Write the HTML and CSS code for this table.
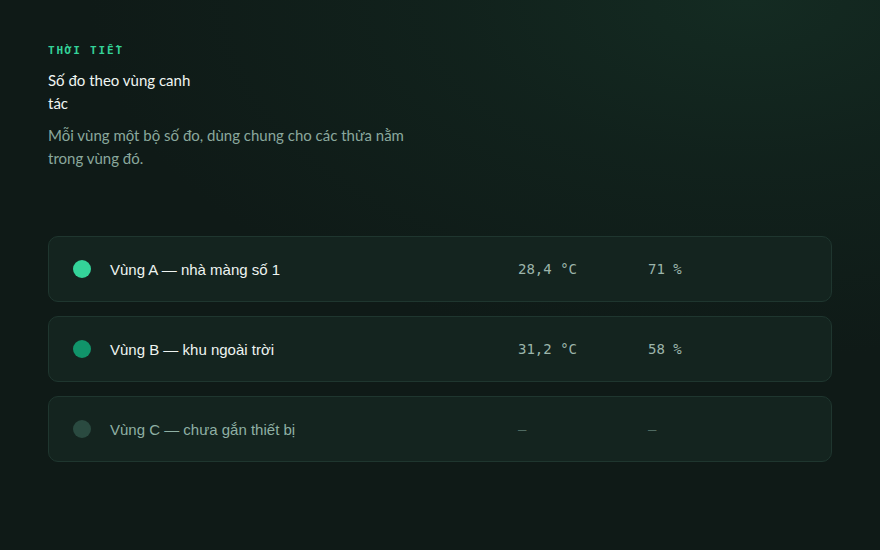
FILE: index.html
```html
<!DOCTYPE html>
<html lang="vi">
<head>
<meta charset="utf-8">
<link rel="stylesheet" href="styles.css">
</head>
<body>
<main class="page">
  <header class="intro">
    <p class="eyebrow">THỜI TIẾT</p>
    <h1 class="title">Số đo theo vùng canh tác</h1>
    <p class="desc">Mỗi vùng một bộ số đo, dùng chung cho các thửa nằm trong vùng đó.</p>
  </header>
  <ul class="zones">
    <li class="zone">
      <span class="dot dot-on"></span>
      <span class="name">Vùng A — nhà màng số 1</span>
      <span class="val">28,4 °C</span>
      <span class="val">71 %</span>
    </li>
    <li class="zone">
      <span class="dot dot-mid"></span>
      <span class="name">Vùng B — khu ngoài trời</span>
      <span class="val">31,2 °C</span>
      <span class="val">58 %</span>
    </li>
    <li class="zone zone-off">
      <span class="dot dot-off"></span>
      <span class="name">Vùng C — chưa gắn thiết bị</span>
      <span class="val val-off">–</span>
      <span class="val val-off">–</span>
    </li>
  </ul>
</main>
</body>
</html>
```

FILE: styles.css
```css
* { box-sizing: border-box; }
html, body { margin: 0; height: 100%; }
body {
  background:
    radial-gradient(ellipse 75% 65% at 85% 0%, #142b22 0%, rgba(19,41,33,0.5) 45%, rgba(15,26,23,0) 100%),
    #0f1a17;
  font-family: "Lato", "Noto Sans", sans-serif;
  color: #e6efeb;
}
.page { padding: 42px 48px 0 48px; }
.intro { margin-bottom: 66px; }
.eyebrow {
  margin: 0;
  font-family: "DejaVu Sans Mono", monospace;
  font-weight: bold;
  font-size: 11px;
  letter-spacing: 1.8px;
  color: #34d399;
  line-height: 16px;
  padding-top: 1px;
}
.title {
  margin: 10px 0 0 0;
  font-size: 15px;
  font-weight: normal;
  line-height: 23px;
  max-width: 155px;
  color: #f0f5f2;
}
.desc {
  margin: 9px 0 0 0;
  font-size: 15px;
  line-height: 23px;
  max-width: 370px;
  color: #8aa89d;
}
.zones {
  list-style: none;
  margin: 0;
  padding: 0;
  display: flex;
  flex-direction: column;
  gap: 14px;
}
.zone {
  display: grid;
  grid-template-columns: 18px 1fr 130px 130px;
  align-items: center;
  height: 66px;
  padding: 0 53px 0 24px;
  background: #14241f;
  border: 1px solid #1f362f;
  border-radius: 10px;
}
.dot {
  width: 18px;
  height: 18px;
  border-radius: 50%;
}
.dot-on { background: #34d399; }
.dot-mid { background: #11946a; }
.dot-off { background: #2a4a40; }
.name {
  margin-left: 19px;
  font-family: "Liberation Sans", Arial, sans-serif;
  font-size: 15px;
  color: #eef4f1;
}
.zone-off .name { color: #8fb0a4; }
.val {
  font-family: "DejaVu Sans Mono", monospace;
  font-size: 14px;
  color: #9cb5ab;
}
.val-off { color: #4f6a61; }
```
